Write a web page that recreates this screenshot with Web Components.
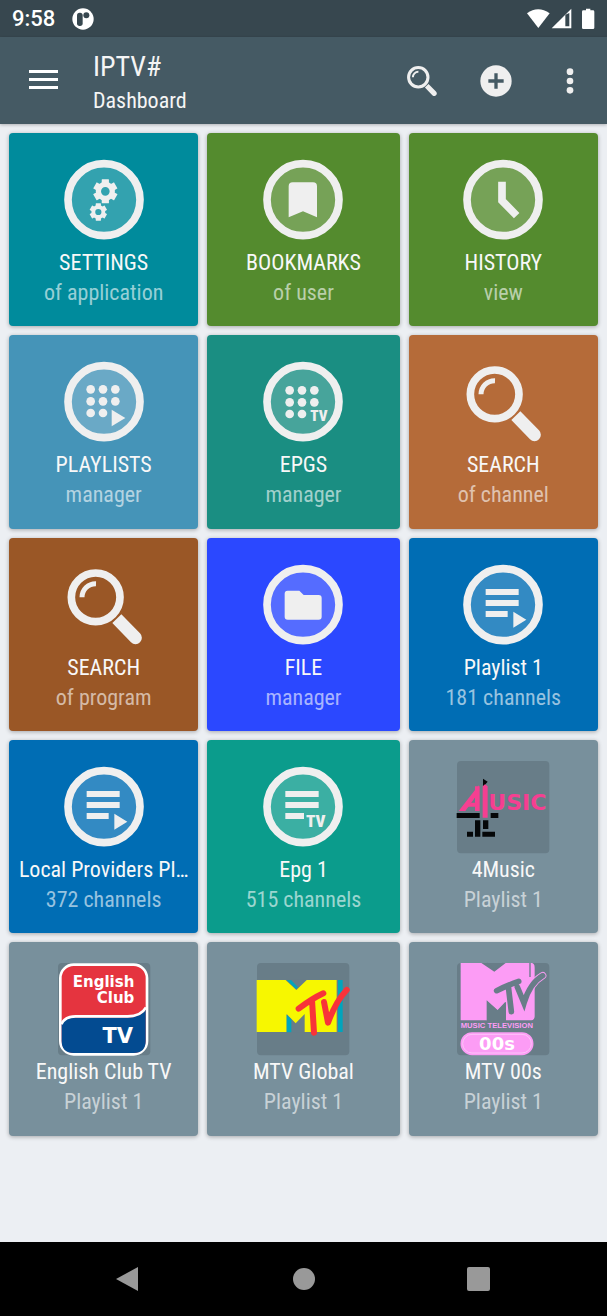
<!DOCTYPE html>
<html lang="en">
<head>
<meta charset="utf-8">
<meta name="viewport" content="width=device-width, initial-scale=1">
<title>IPTV#</title>
<style>
    body {
        margin: 0;
        background: #eceff3;
        font-family: "Roboto Condensed", "Liberation Sans Narrow", Roboto, sans-serif;
    }
</style>
</head>
<body>
<iptv-screen>
    <status-bar slot="status" time="9:58"></status-bar>
    <app-bar slot="bar" heading="IPTV#" subheading="Dashboard"></app-bar>
    <dash-card icon="settings" color="#008b9c" heading="SETTINGS" detail="of application"></dash-card>
    <dash-card icon="bookmark" color="#548b2e" heading="BOOKMARKS" detail="of user"></dash-card>
    <dash-card icon="history" color="#548b2e" heading="HISTORY" detail="view"></dash-card>
    <dash-card icon="playlists" color="#4594b8" heading="PLAYLISTS" detail="manager"></dash-card>
    <dash-card icon="epgs" color="#1a8e82" heading="EPGS" detail="manager"></dash-card>
    <dash-card icon="search" color="#b56b39" heading="SEARCH" detail="of channel"></dash-card>
    <dash-card icon="search" color="#9a5726" heading="SEARCH" detail="of program"></dash-card>
    <dash-card icon="file" color="#2b48ff" heading="FILE" detail="manager"></dash-card>
    <dash-card icon="playlist" color="#006db4" heading="Playlist 1" detail="181 channels"></dash-card>
    <dash-card icon="playlist" color="#006db4" heading="Local Providers Pl…" detail="372 channels"></dash-card>
    <dash-card icon="epg" color="#0b9c8c" heading="Epg 1" detail="515 channels"></dash-card>
    <dash-card icon="fourmusic" color="#78909c" heading="4Music" detail="Playlist 1"></dash-card>
    <dash-card icon="english" color="#78909c" heading="English Club TV" detail="Playlist 1"></dash-card>
    <dash-card icon="mtv" color="#78909c" heading="MTV Global" detail="Playlist 1"></dash-card>
    <dash-card icon="mtv00" color="#78909c" heading="MTV 00s" detail="Playlist 1"></dash-card>
    <nav-bar slot="nav"></nav-bar>
</iptv-screen>

<script>
const ring = '<circle cx="141" cy="140" r="108" fill="#fff" fill-opacity=".2" stroke="#efefef" stroke-width="23"/>';
const tile = '<rect x="3" y="3" width="277" height="277" rx="12" fill="#687d88"/>';
const lens = `
    <circle cx="116" cy="118" r="73" fill="none" stroke="#efefef" stroke-width="23"/>
    <path d="M75 118a41 41 0 0 1 42-41" fill="none" stroke="#efefef" stroke-width="15"/>
    <path d="M166 195l27-26 56 57a19 19 0 0 1-27 27z"/>`;
const dots = (y) => [y, y + 36, y + 71].map((cy) =>
    [101, 138, 175].map((cx) => `<circle cx="${cx}" cy="${cy}" r="13"/>`).join('')).join('');

// one gear: a ring with six teeth around it
const gear = (x, y, r) => {
    let teeth = '';
    for (let a = 0; a < 360; a += 60) {
        teeth += `<rect x="${-r * 0.3}" y="${-r}" width="${r * 0.6}" height="${r * 0.5}" rx="1" transform="rotate(${a})"/>`;
    }
    return `<g transform="translate(${x} ${y})">${teeth}<circle r="${r * 0.58}" fill="none" stroke="#efefef" stroke-width="${r * 0.44}"/></g>`;
};

const icons = {
    settings: ring + gear(145, 115, 36) + gear(124, 177, 26),
    bookmark: ring + '<path d="M110 88h61q12 0 12 12v93l-42-18-43 18v-93q0-12 12-12z"/>',
    history: ring + '<path d="M138 86v57l44 45" fill="none" stroke="#efefef" stroke-width="23"/>',
    playlists: ring + dots(103).replace(/<circle cx="175" cy="174" r="13"\/>/, '') + '<path d="M164 164l41 25-41 25z"/>',
    epgs: ring + dots(106).replace(/<circle cx="175" cy="177" r="13"\/>/, '') + '<text x="163" y="198" font-size="45" font-weight="900">TV</text>',
    search: lens,
    file: ring + '<path d="M95 98h35l13 13h45q9 0 9 9v56q0 9-9 9H95q-9 0-9-9v-69q0-9 9-9z"/>',
    playlist: ring + '<path d="M89 93h99v18H89zM89 126h99v18H89zM89 159h66v18H89zM172 161l39 24-39 24z"/>',
    epg: ring + '<path d="M88 93h100v18H88zM88 126h100v18H88zM88 159h56v18H88z"/><text x="150" y="200" font-size="51" font-weight="900">TV</text>',
    fourmusic: tile + `
        <g fill="#050708">
            <path d="M81 56l14 9-9 11-5 5zM2 159h69v15H2zM104 159h23v15h-23zM57 181h16v49H57zM81 181h16v26H81zM33 215h18v15H33zM79 215h38v15H79z"/>
        </g>
        <g fill="#f53f91">
            <path d="M8 153l49-63 12-14v20L28 153zM57 79h14v74H57zM80 79l7-6 8 6v94H80z"/>
            <path d="M45 128h18v12H34z"/>
            <text x="97" y="151" font-family="DejaVu Sans" font-size="66" font-weight="bold">USIC</text>
        </g>`,
    english: tile + `
        <rect x="10" y="8" width="260" height="269" rx="40" fill="#e5343f" stroke="#fff" stroke-width="8"/>
        <path d="M14 183q10-16 42-16h156q40 0 54-25v95q0 36-36 36H50q-36 0-36-36z" fill="#034b91"/>
        <path d="M13 187q10-24 43-24h156q40 0 55-27" fill="none" stroke="#fff" stroke-width="8"/>
        <g fill="#fff" font-family="DejaVu Sans" font-weight="bold" text-anchor="end">
            <text x="232" y="75" font-size="45">English</text>
            <text x="232" y="123" font-size="45">Club</text>
            <text x="228" y="244" font-size="63">TV</text>
        </g>`,
    mtv: tile + `
        <path d="M246 54h14v156h-14z" fill="#00a5bd"/>
        <path d="M2 54h240v156H2z" fill="#f7f700"/>
        <path d="M88 53h65l-32 31zM92 211v-55l27 28 27-28v55z" fill="#687d88"/>
        <path d="M92 54l28 27 6-5-21-22zM92 158v53h14v-39z" fill="#00a5bd"/>
        <g fill="none" stroke="#f83339" stroke-width="18" stroke-linecap="round" stroke-linejoin="round">
            <path d="M128 140q40-30 74-46M168 114l6 98M204 120l12 62q24-65 56-98"/>
        </g>`,
    mtv00: tile + `
        <path d="M14 3h62l39 26 34-26h77q10 0 10 14v145q0 12-10 13H150v-54l-25 25-32-28v57H14z" fill="#fc9cf5"/>
        <path d="M222 3v42M94 175v-56l31 28 24-26M92 3l24 20 26-20" fill="none" stroke="#687d88" stroke-width="4"/>
        <path d="M122 86q30-15 66-28M157 73l9 76M184 75l20 48q18-60 56-82" fill="none" stroke="#fc9cf5" stroke-width="22" stroke-linecap="round"/>
        <path d="M122 86q30-15 66-28M157 73l9 76M184 75l20 48q18-60 56-82" fill="none" stroke="#687d88" stroke-width="17" stroke-linecap="round"/>
        <text x="14" y="199" fill="#fc9cf5" font-family="Liberation Sans" font-size="23" font-weight="bold">MUSIC TELEVISION</text>
        <rect x="16" y="213" width="214" height="64" rx="32" fill="#fc9cf5" stroke="#fc9cf5" stroke-width="5"/>
        <rect x="20" y="217" width="206" height="56" rx="28" fill="none" stroke="#fdc4fa" stroke-width="3"/>
        <text x="123" y="264" fill="#fff" font-family="DejaVu Sans" font-size="54" font-weight="bold" text-anchor="middle">00s</text>`
};

class IptvScreen extends HTMLElement {
    constructor() {
        super();
        this.attachShadow({ mode: 'open' });
    }

    connectedCallback() {
        this.shadowRoot.innerHTML = `
        <style>
        :host {
            display: flex;
            flex-direction: column;
            min-height: 100vh;
        }
        main {
            flex: 1;
            display: grid;
            grid-template-columns: repeat(3, minmax(0, 1fr));
            align-content: start;
        }
        ::slotted(dash-card) {
            padding: 9px 5px 0;
        }
        ::slotted(dash-card:nth-of-type(3n+1)) {
            padding: 9px 4px 0 9px;
        }
        ::slotted(dash-card:nth-of-type(3n)) {
            padding: 9px 9px 0 4px;
        }
        </style>
        <slot name="status"></slot>
        <slot name="bar"></slot>
        <main><slot></slot></main>
        <slot name="nav"></slot>
        `;
    }
}
customElements.define('iptv-screen', IptvScreen);

class StatusBar extends HTMLElement {
    constructor() {
        super();
        this.attachShadow({ mode: 'open' });
    }

    connectedCallback() {
        this.shadowRoot.innerHTML = `
        <style>
        :host {
            display: flex;
            align-items: center;
            justify-content: space-between;
            height: 37px;
            padding: 0 12px;
            background: #37474f;
            color: #fff;
            font: 500 22px/38px Roboto, sans-serif;
        }
        div {
            display: flex;
            align-items: center;
            gap: 17px;
        }
        svg {
            display: block;
            fill: #fff;
        }
        </style>
        <div>
            <span>${this.getAttribute('time')}</span>
            <svg width="22" height="22" viewBox="0 0 66 66">
                <circle cx="33" cy="33" r="32"/>
                <rect x="15" y="14" width="17" height="40" rx="8" fill="#37474f"/>
                <circle cx="43" cy="22" r="9" fill="#37474f"/>
            </svg>
        </div>
        <svg width="70" height="22" viewBox="0 0 210 66">
            <path d="M6 16q33-24 68 0L40 60z"/>
            <path d="M80 61l59-59v59z"/>
            <path d="M121 20v35h12V15z" fill="#37474f"/>
            <path d="M183 2h13v5h8q4 0 4 4v48q0 4-4 4h-29q-4 0-4-4V11q0-4 4-4h8z"/>
        </svg>
        `;
    }
}
customElements.define('status-bar', StatusBar);

class AppBar extends HTMLElement {
    constructor() {
        super();
        this.attachShadow({ mode: 'open' });
    }

    connectedCallback() {
        this.shadowRoot.innerHTML = `
        <style>
        :host {
            display: flex;
            align-items: center;
            height: 87px;
            padding: 0 13px 0 19px;
            box-sizing: border-box;
            background: #455a64;
            color: #f5f5f5;
            box-shadow: 0 1px 3px rgba(0, 0, 0, .25);
        }
        .titles {
            flex: 1;
            padding: 5px 0 0 26px;
        }
        h1, p {
            margin: 0;
            font-weight: 400;
        }
        h1 {
            font-size: 28px;
            line-height: 36px;
        }
        p {
            font-size: 22px;
            line-height: 32px;
        }
        button {
            display: grid;
            place-items: center;
            width: 48px;
            height: 48px;
            padding: 0;
            border: 0;
            background: none;
        }
        .actions {
            display: flex;
            gap: 26px;
        }
        svg {
            display: block;
            fill: #efefef;
        }
        </style>
        <button aria-label="Menu">
            <svg width="30" height="22" viewBox="0 0 30 22"><path d="M1 0h29v3H1zM1 8h29v3H1zM1 16h29v3H1z" fill="#fff"/></svg>
        </button>
        <div class="titles">
            <h1>${this.getAttribute('heading')}</h1>
            <p>${this.getAttribute('subheading')}</p>
        </div>
        <div class="actions">
            <button aria-label="Search"><svg width="30" height="30" viewBox="31 33 226 226">${lens}</svg></button>
            <button aria-label="Add">
                <svg width="32" height="32" viewBox="0 0 96 96"><circle cx="48" cy="48" r="47"/><path d="M25 48h46M48 25v46" stroke="#455a64" stroke-width="10"/></svg>
            </button>
            <button aria-label="More">
                <svg width="8" height="26" viewBox="0 0 24 78"><circle cx="12" cy="11" r="10"/><circle cx="12" cy="39" r="10"/><circle cx="12" cy="67" r="10"/></svg>
            </button>
        </div>
        `;
    }
}
customElements.define('app-bar', AppBar);

class DashCard extends HTMLElement {
    constructor() {
        super();
        this.attachShadow({ mode: 'open' });
    }

    getStyles() {
        return `
        <style>
        :host {
            display: block;
            box-sizing: border-box;
            aspect-ratio: 1;
            min-width: 0;
        }
        button {
            display: flex;
            flex-direction: column;
            align-items: center;
            width: 100%;
            height: 100%;
            padding: 20px 8px 0;
            border: 0;
            border-radius: 4px;
            background: ${this.getAttribute('color')};
            box-shadow: 0 1px 4px rgba(0, 0, 0, .3);
            color: #f8f8f8;
            font: 400 22px/30px "Roboto Condensed", "Liberation Sans Narrow", Roboto, sans-serif;
        }
        svg {
            flex: none;
            display: block;
            margin-bottom: 1px;
            fill: #efefef;
        }
        .heading, .detail {
            max-width: 100%;
            overflow: hidden;
            text-overflow: ellipsis;
            white-space: nowrap;
        }
        .detail {
            color: rgba(255, 255, 255, .6);
        }
        </style>
        `;
    }

    connectedCallback() {
        this.shadowRoot.innerHTML = `
        ${this.getStyles()}
        <button>
            <svg width="94" height="94" viewBox="0 0 282 282">${icons[this.getAttribute('icon')]}</svg>
            <span class="heading">${this.getAttribute('heading')}</span>
            <span class="detail">${this.getAttribute('detail')}</span>
        </button>
        `;
    }
}
customElements.define('dash-card', DashCard);

class NavBar extends HTMLElement {
    constructor() {
        super();
        this.attachShadow({ mode: 'open' });
    }

    connectedCallback() {
        this.shadowRoot.innerHTML = `
        <style>
        :host {
            display: grid;
            grid-template-columns: repeat(3, 1fr);
            height: 74px;
            padding: 0 41px;
            background: #000;
        }
        button {
            display: grid;
            place-items: center;
            padding: 0;
            border: 0;
            background: none;
        }
        svg {
            display: block;
            fill: #999;
        }
        </style>
        <button aria-label="Back"><svg width="26" height="26" viewBox="0 0 26 26"><path d="M0 13L22 1v24z"/></svg></button>
        <button aria-label="Home"><svg width="26" height="26" viewBox="0 0 26 26"><circle cx="13" cy="13" r="11"/></svg></button>
        <button aria-label="Recent apps"><svg width="26" height="26" viewBox="0 0 26 26"><rect x="1" y="1" width="23" height="24" rx="2"/></svg></button>
        `;
    }
}
customElements.define('nav-bar', NavBar);
</script>
</body>
</html>
